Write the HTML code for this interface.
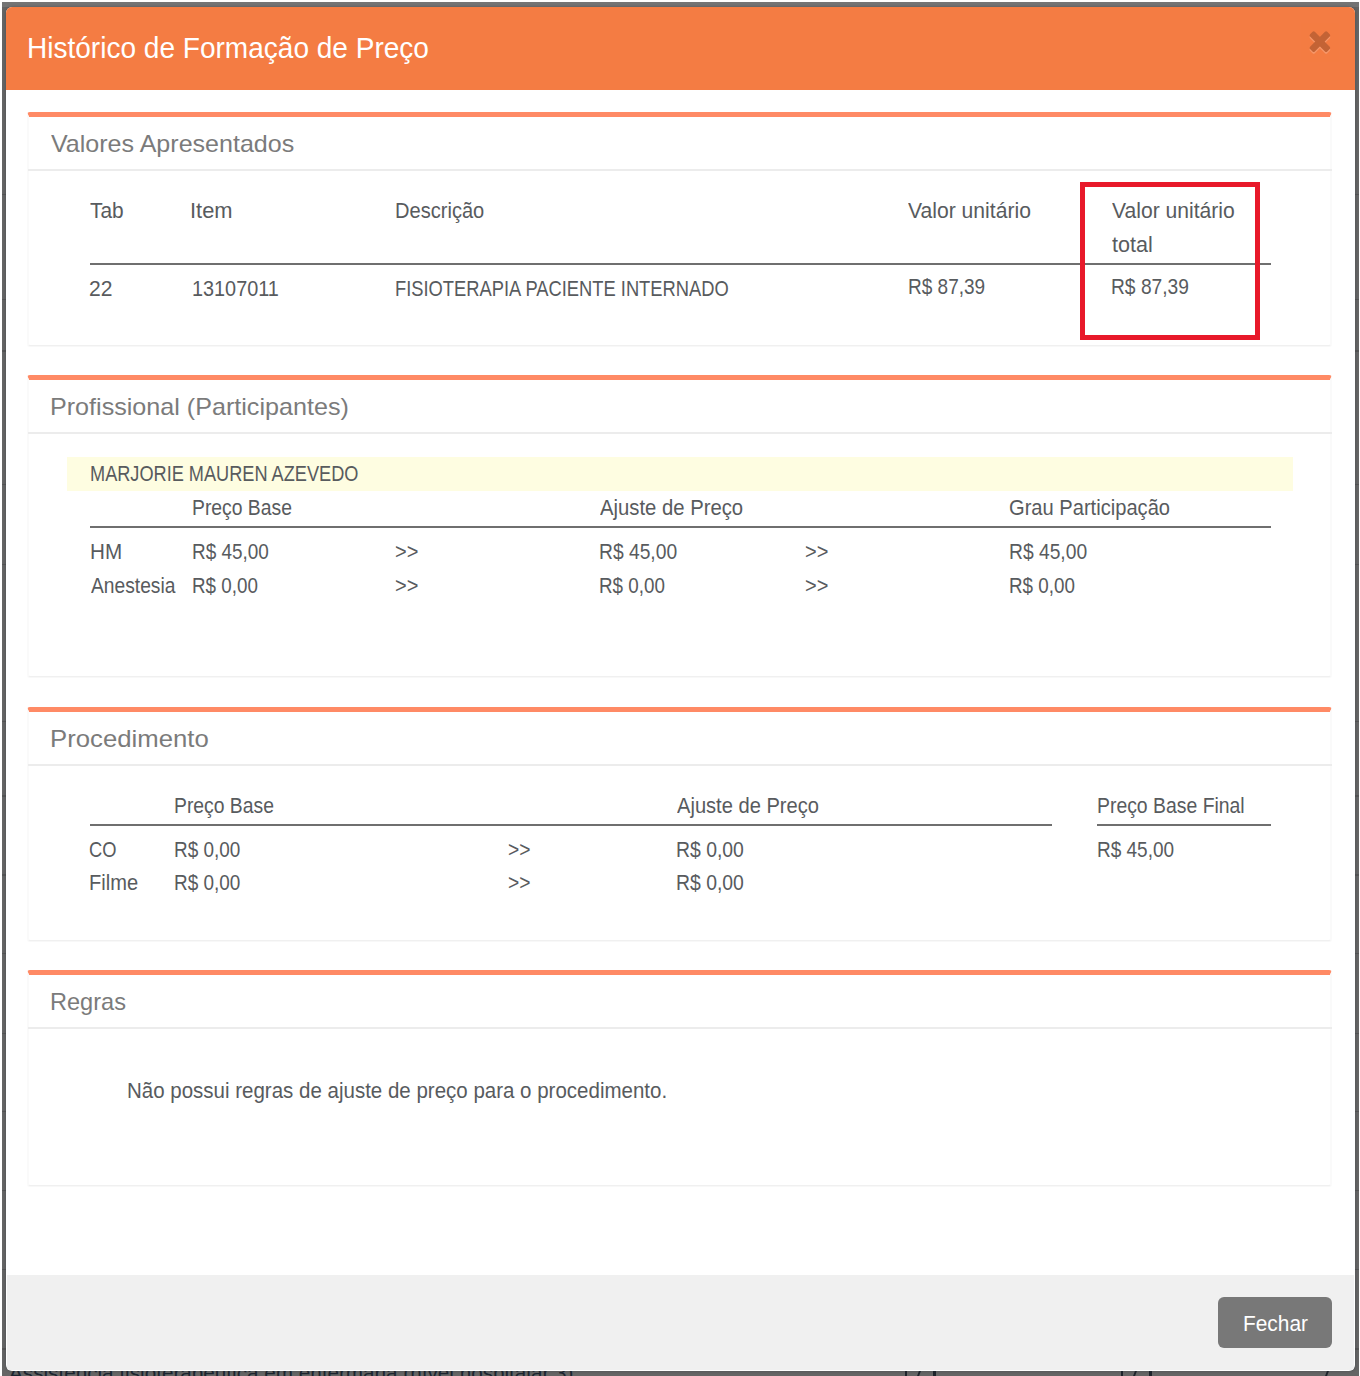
<!DOCTYPE html>
<html><head><meta charset="utf-8">
<style>
*{box-sizing:border-box;margin:0;padding:0}
html,body{width:1360px;height:1376px;overflow:hidden;background:#fff;font-family:"Liberation Sans",sans-serif;}
#bd{position:absolute;left:2px;top:2px;width:1357px;height:1374px;background:#656565;}
#bgtxt{position:absolute;left:9px;top:1362px;font-size:21px;line-height:1;color:#1c2530;white-space:nowrap;transform-origin:0 0;transform:scaleX(0.985)}
#modal{position:absolute;left:6px;top:7px;width:1349px;height:1364px;background:#fff;border-radius:6px;overflow:hidden;box-shadow:0 0 3px rgba(40,46,52,.45);}
#hdr{position:absolute;left:0;top:0;width:1349px;height:83px;background:#f47c43;}
.t{position:absolute;white-space:nowrap;line-height:1;transform-origin:0 0;}
#footer{position:absolute;left:1px;top:1268px;width:1347px;height:95px;background:#f0f0f0;}
#btn{position:absolute;left:1212px;top:1290px;width:114px;height:51px;background:#787878;border-radius:6px;}
</style></head>
<body>
<div id="bd"></div>
<div style="position:absolute;left:2px;top:2px;width:1357px;height:5px;background:#747474"></div>
<div style="position:absolute;left:2px;top:194px;width:1357px;height:1px;background:#555"></div><div style="position:absolute;left:2px;top:299px;width:1357px;height:1px;background:#555"></div><div style="position:absolute;left:2px;top:350px;width:1357px;height:2px;background:#555"></div><div style="position:absolute;left:2px;top:484px;width:1357px;height:1px;background:#555"></div><div style="position:absolute;left:2px;top:564px;width:1357px;height:1px;background:#555"></div><div style="position:absolute;left:2px;top:721px;width:1357px;height:1px;background:#555"></div><div style="position:absolute;left:2px;top:795px;width:1357px;height:2px;background:#555"></div><div style="position:absolute;left:2px;top:874px;width:1357px;height:2px;background:#555"></div><div style="position:absolute;left:2px;top:953px;width:1357px;height:1px;background:#555"></div><div style="position:absolute;left:2px;top:1033px;width:1357px;height:1px;background:#555"></div><div style="position:absolute;left:2px;top:1111px;width:1357px;height:1px;background:#555"></div><div style="position:absolute;left:2px;top:1190px;width:1357px;height:1px;background:#555"></div><div style="position:absolute;left:2px;top:1269px;width:1357px;height:1px;background:#555"></div><div style="position:absolute;left:2px;top:1348px;width:1357px;height:2px;background:#555"></div>
<div style="position:absolute;left:905px;top:1371px;width:2px;height:5px;background:#1d232b;"></div><div style="position:absolute;left:918px;top:1371px;width:2px;height:5px;background:#1d232b;transform:skewX(-20deg)"></div><div style="position:absolute;left:933px;top:1371px;width:3px;height:5px;background:#1d232b;"></div><div style="position:absolute;left:1121px;top:1371px;width:2px;height:5px;background:#1d232b;"></div><div style="position:absolute;left:1134px;top:1371px;width:2px;height:5px;background:#1d232b;transform:skewX(-20deg)"></div><div style="position:absolute;left:1149px;top:1371px;width:3px;height:5px;background:#1d232b;"></div><div style="position:absolute;left:1326px;top:1371px;width:2px;height:5px;background:#1d232b;transform:skewX(-20deg)"></div>
<div id="bgtxt">Assistência fisioterapêutica em enfermaria (nível hospitalar 3)</div>
<div id="modal">
<div id="hdr"></div>
<svg style="position:absolute;left:1294px;top:15px" width="40" height="40" viewBox="0 0 40 40">
<g opacity="0.2">
<g transform="translate(19.9 21.3) rotate(45)"><rect x="-12.15" y="-3.35" width="24.3" height="6.7" rx="1.6" fill="#fff"/><rect x="-3.35" y="-12.15" width="6.7" height="24.3" rx="1.6" fill="#fff"/></g>
<g transform="translate(19.9 19.6) rotate(45)"><rect x="-12.15" y="-3.35" width="24.3" height="6.7" rx="1.6" fill="#000"/><rect x="-3.35" y="-12.15" width="6.7" height="24.3" rx="1.6" fill="#000"/></g>
</g>
</svg>
<div style="position:absolute;left:21px;top:105px;width:1305px;height:234px;border:2px solid #fafafa;border-bottom:1px solid #f0f0f0;border-top:5px solid #ff8a65;border-radius:3px;box-shadow:0 1px 1px rgba(0,0,0,.03)"></div>
<div style="position:absolute;left:22px;top:162px;width:1304px;height:2px;background:#ececec"></div>
<div style="position:absolute;left:21px;top:368px;width:1305px;height:302px;border:2px solid #fafafa;border-bottom:1px solid #f0f0f0;border-top:5px solid #ff8a65;border-radius:3px;box-shadow:0 1px 1px rgba(0,0,0,.03)"></div>
<div style="position:absolute;left:22px;top:425px;width:1304px;height:2px;background:#ececec"></div>
<div style="position:absolute;left:21px;top:700px;width:1305px;height:234px;border:2px solid #fafafa;border-bottom:1px solid #f0f0f0;border-top:5px solid #ff8a65;border-radius:3px;box-shadow:0 1px 1px rgba(0,0,0,.03)"></div>
<div style="position:absolute;left:22px;top:757px;width:1304px;height:2px;background:#ececec"></div>
<div style="position:absolute;left:21px;top:963px;width:1305px;height:216px;border:2px solid #fafafa;border-bottom:1px solid #f0f0f0;border-top:5px solid #ff8a65;border-radius:3px;box-shadow:0 1px 1px rgba(0,0,0,.03)"></div>
<div style="position:absolute;left:22px;top:1020px;width:1304px;height:2px;background:#ececec"></div>
<div style="position:absolute;left:61px;top:450px;width:1226px;height:34px;background:#fefde1"></div>
<div style="position:absolute;left:84px;top:256px;width:1181px;height:2px;background:#6f6f6f"></div>
<div style="position:absolute;left:84px;top:519px;width:1181px;height:2px;background:#6f6f6f"></div>
<div style="position:absolute;left:84px;top:817px;width:962px;height:2px;background:#6f6f6f"></div>
<div style="position:absolute;left:1091px;top:817px;width:174px;height:2px;background:#6f6f6f"></div>
<div style="position:absolute;left:1074px;top:175px;width:180px;height:158px;border:5px solid #e8192a"></div>
<div id="footer"></div>
<div id="btn"></div>
<div class="t" style="left:21.07px;top:27px;font-size:29px;color:#ffffff;transform:scaleX(0.9666)">Histórico de Formação de Preço</div>
<div class="t" style="left:45.00px;top:125px;font-size:24px;color:#7b7b7b;transform:scaleX(1.0438)">Valores Apresentados</div>
<div class="t" style="left:43.71px;top:388px;font-size:24px;color:#7b7b7b;transform:scaleX(1.0468)">Profissional (Participantes)</div>
<div class="t" style="left:43.86px;top:720px;font-size:24px;color:#7b7b7b;transform:scaleX(1.0717)">Procedimento</div>
<div class="t" style="left:44.14px;top:983px;font-size:24px;color:#7b7b7b;transform:scaleX(0.9813)">Regras</div>
<div class="t" style="left:84.00px;top:194px;font-size:21.5px;color:#585b5e;transform:scaleX(0.9706)">Tab</div>
<div class="t" style="left:184.46px;top:194px;font-size:21.5px;color:#585b5e;transform:scaleX(1.0179)">Item</div>
<div class="t" style="left:389.27px;top:194px;font-size:21.5px;color:#585b5e;transform:scaleX(0.9340)">Descrição</div>
<div class="t" style="left:901.90px;top:194px;font-size:21.5px;color:#585b5e;transform:scaleX(0.9824)">Valor unitário</div>
<div class="t" style="left:1106.00px;top:194px;font-size:21.5px;color:#585b5e;transform:scaleX(0.9816)">Valor unitário</div>
<div class="t" style="left:1106.00px;top:228px;font-size:21.5px;color:#585b5e;transform:scaleX(1.0025)">total</div>
<div class="t" style="left:83.02px;top:272px;font-size:21.5px;color:#585b5e;transform:scaleX(0.9818)">22</div>
<div class="t" style="left:185.58px;top:272px;font-size:21.5px;color:#585b5e;transform:scaleX(0.9228)">13107011</div>
<div class="t" style="left:389.35px;top:272px;font-size:21.5px;color:#585b5e;transform:scaleX(0.8526)">FISIOTERAPIA PACIENTE INTERNADO</div>
<div class="t" style="left:901.82px;top:270px;font-size:21.5px;color:#585b5e;transform:scaleX(0.8837)">R$ 87,39</div>
<div class="t" style="left:1105.11px;top:270px;font-size:21.5px;color:#585b5e;transform:scaleX(0.8930)">R$ 87,39</div>
<div class="t" style="left:83.76px;top:457px;font-size:21.5px;color:#585b5e;transform:scaleX(0.8446)">MARJORIE MAUREN AZEVEDO</div>
<div class="t" style="left:185.60px;top:491px;font-size:21.5px;color:#585b5e;transform:scaleX(0.8991)">Preço Base</div>
<div class="t" style="left:594.00px;top:491px;font-size:21.5px;color:#585b5e;transform:scaleX(0.9430)">Ajuste de Preço</div>
<div class="t" style="left:1003.06px;top:491px;font-size:21.5px;color:#585b5e;transform:scaleX(0.9357)">Grau Participação</div>
<div class="t" style="left:83.64px;top:535px;font-size:21.5px;color:#585b5e;transform:scaleX(0.9613)">HM</div>
<div class="t" style="left:185.62px;top:535px;font-size:21.5px;color:#585b5e;transform:scaleX(0.8802)">R$ 45,00</div>
<div class="t" style="left:389.27px;top:535px;font-size:21.5px;color:#585b5e;transform:scaleX(0.9304)">&gt;&gt;</div>
<div class="t" style="left:593.10px;top:535px;font-size:21.5px;color:#585b5e;transform:scaleX(0.8953)">R$ 45,00</div>
<div class="t" style="left:799.27px;top:535px;font-size:21.5px;color:#585b5e;transform:scaleX(0.9304)">&gt;&gt;</div>
<div class="t" style="left:1003.10px;top:535px;font-size:21.5px;color:#585b5e;transform:scaleX(0.8953)">R$ 45,00</div>
<div class="t" style="left:84.60px;top:569px;font-size:21.5px;color:#585b5e;transform:scaleX(0.8937)">Anestesia</div>
<div class="t" style="left:185.63px;top:569px;font-size:21.5px;color:#585b5e;transform:scaleX(0.8743)">R$ 0,00</div>
<div class="t" style="left:389.27px;top:569px;font-size:21.5px;color:#585b5e;transform:scaleX(0.9304)">&gt;&gt;</div>
<div class="t" style="left:593.13px;top:569px;font-size:21.5px;color:#585b5e;transform:scaleX(0.8743)">R$ 0,00</div>
<div class="t" style="left:799.27px;top:569px;font-size:21.5px;color:#585b5e;transform:scaleX(0.9304)">&gt;&gt;</div>
<div class="t" style="left:1003.13px;top:569px;font-size:21.5px;color:#585b5e;transform:scaleX(0.8743)">R$ 0,00</div>
<div class="t" style="left:167.50px;top:789px;font-size:21.5px;color:#585b5e;transform:scaleX(0.8991)">Preço Base</div>
<div class="t" style="left:670.80px;top:789px;font-size:21.5px;color:#585b5e;transform:scaleX(0.9351)">Ajuste de Preço</div>
<div class="t" style="left:1091.00px;top:789px;font-size:21.5px;color:#585b5e;transform:scaleX(0.9019)">Preço Base Final</div>
<div class="t" style="left:83.35px;top:833px;font-size:21.5px;color:#585b5e;transform:scaleX(0.8516)">CO</div>
<div class="t" style="left:167.52px;top:833px;font-size:21.5px;color:#585b5e;transform:scaleX(0.8797)">R$ 0,00</div>
<div class="t" style="left:502.20px;top:833px;font-size:21.5px;color:#585b5e;transform:scaleX(0.8957)">&gt;&gt;</div>
<div class="t" style="left:669.90px;top:833px;font-size:21.5px;color:#585b5e;transform:scaleX(0.9014)">R$ 0,00</div>
<div class="t" style="left:1091.02px;top:833px;font-size:21.5px;color:#585b5e;transform:scaleX(0.8826)">R$ 45,00</div>
<div class="t" style="left:83.47px;top:866px;font-size:21.5px;color:#585b5e;transform:scaleX(0.9333)">Filme</div>
<div class="t" style="left:167.52px;top:866px;font-size:21.5px;color:#585b5e;transform:scaleX(0.8797)">R$ 0,00</div>
<div class="t" style="left:502.20px;top:866px;font-size:21.5px;color:#585b5e;transform:scaleX(0.8957)">&gt;&gt;</div>
<div class="t" style="left:669.90px;top:866px;font-size:21.5px;color:#585b5e;transform:scaleX(0.9014)">R$ 0,00</div>
<div class="t" style="left:120.65px;top:1074px;font-size:21.5px;color:#585b5e;transform:scaleX(0.9534)">Não possui regras de ajuste de preço para o procedimento.</div>
<div class="t" style="left:1236.53px;top:1307px;font-size:21.5px;color:#ffffff;transform:scaleX(0.9712)">Fechar</div>
</div>
</body></html>
